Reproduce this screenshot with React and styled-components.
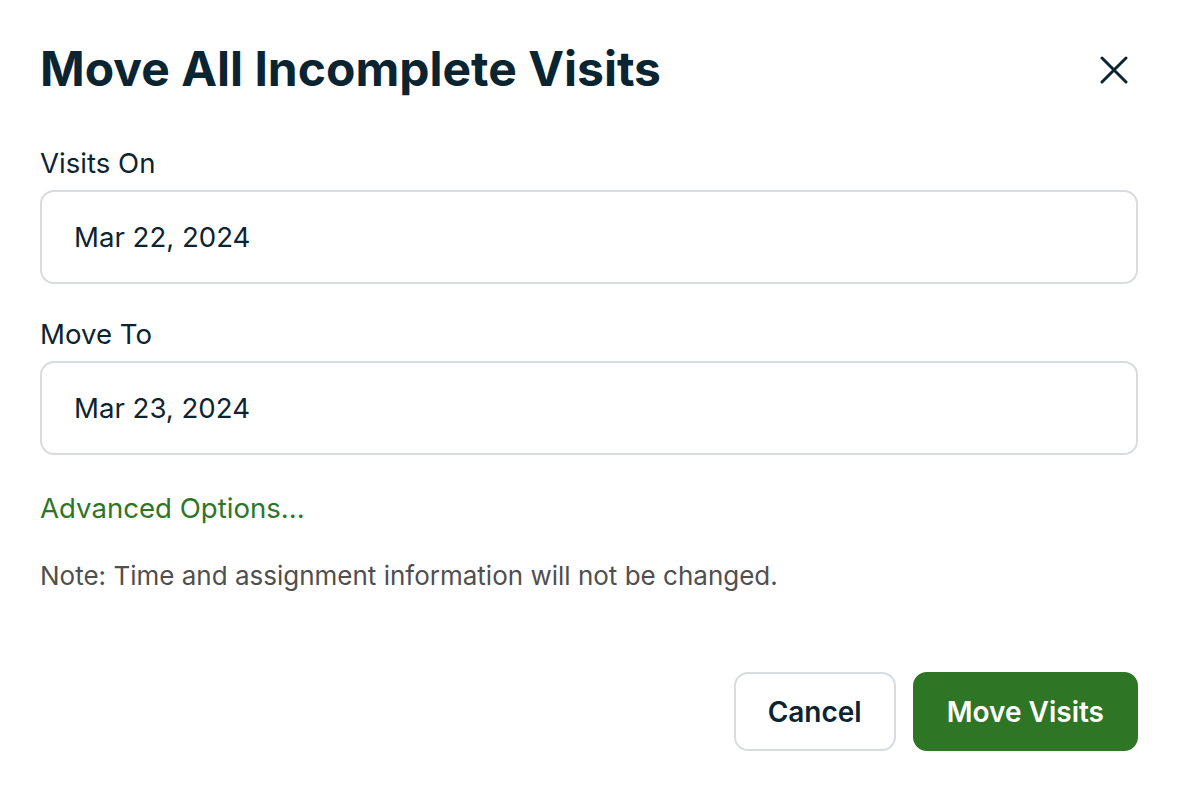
import React from 'react';
import styled, { createGlobalStyle } from 'styled-components';

const GlobalStyle = createGlobalStyle`
  html, body {
    margin: 0;
    padding: 0;
    background: #ffffff;
  }
  body {
    font-family: Inter, "Noto Sans", sans-serif;
    color: #0b2432;
  }
`;

const Dialog = styled.div`
  width: 1180px;
  height: 800px;
  box-sizing: border-box;
  padding: 37px 42px 0 40px;
  display: flex;
  flex-direction: column;
`;

const Header = styled.div`
  display: flex;
  align-items: center;
  justify-content: space-between;
  height: 62px;
`;

const Title = styled.h1`
  margin: 0;
  font-size: 48px;
  font-weight: 700;
  color: #0b2432;
`;

const CloseButton = styled.button`
  border: none;
  background: none;
  padding: 0;
  width: 40px;
  height: 40px;
  margin-top: 4px;
  margin-right: 4px;
  display: flex;
  align-items: center;
  justify-content: center;
  cursor: pointer;
  color: #0b2432;
`;

const Field = styled.div`
  display: flex;
  flex-direction: column;
  gap: 11px;
  margin-top: ${p => p.$top}px;
`;

const Label = styled.label`
  font-size: 27.6px;
  line-height: 32px;
  color: #0b2432;
`;

const DateBox = styled.div`
  height: 94px;
  box-sizing: border-box;
  border: 2px solid #d8dcdf;
  border-radius: 14px;
  display: flex;
  align-items: center;
  padding-left: 32px;
  font-size: 27.6px;
  color: #0b2432;
`;

const AdvancedLink = styled.a`
  margin-top: 37px;
  font-size: 27.6px;
  line-height: 32px;
  color: #2e7627;
  cursor: pointer;
`;

const Note = styled.p`
  margin: 36px 0 0;
  font-size: 26px;
  line-height: 32px;
  color: #4f4f4f;
`;

const Footer = styled.div`
  margin-top: 80px;
  display: flex;
  justify-content: flex-end;
  gap: 17px;
`;

const Button = styled.button`
  height: 79px;
  box-sizing: border-box;
  padding: 0 32px;
  border-radius: 14px;
  font-family: Inter, "Noto Sans", sans-serif;
  font-size: 28px;
  font-weight: 600;
  cursor: pointer;
  border: 2px solid ${p => (p.$primary ? '#2f7526' : '#d8dcdf')};
  background: ${p => (p.$primary ? '#2f7526' : '#ffffff')};
  color: ${p => (p.$primary ? '#ffffff' : '#0b2432')};
`;

export default function App() {
  return (
    <>
      <GlobalStyle />
      <Dialog>
        <Header>
          <Title>Move All Incomplete Visits</Title>
          <CloseButton aria-label="Close">
            <svg width="28" height="28" viewBox="0 0 28 28" fill="none" stroke="currentColor" strokeWidth="3" strokeLinecap="round">
              <path d="M2 2L26 26M26 2L2 26" />
            </svg>
          </CloseButton>
        </Header>
        <Field $top={48}>
          <Label>Visits On</Label>
          <DateBox>Mar 22, 2024</DateBox>
        </Field>
        <Field $top={34}>
          <Label>Move To</Label>
          <DateBox>Mar 23, 2024</DateBox>
        </Field>
        <AdvancedLink>Advanced Options...</AdvancedLink>
        <Note>Note: Time and assignment information will not be changed.</Note>
        <Footer>
          <Button>Cancel</Button>
          <Button $primary>Move Visits</Button>
        </Footer>
      </Dialog>
    </>
  );
}
